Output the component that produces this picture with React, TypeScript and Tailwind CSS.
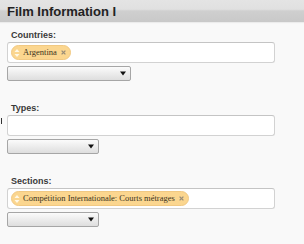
import React from "react";

function Tag({ label }: { label: string }) {
  return (
    <span className="inline-flex h-[15px] items-center rounded-full border border-[#f1c983] bg-[#fbd68f] pl-[2px] pr-[4px]">
      <svg width="6" height="10" viewBox="0 0 6 10" className="mr-[3px]">
        <path d="M3 1 L5.5 4 L0.5 4 Z" fill="#fff8e6" />
        <path d="M3 9 L5.5 6 L0.5 6 Z" fill="#fff8e6" />
      </svg>
      <span className="text-[8.5px] leading-none text-[#3a3320]" style={{ fontFamily: '"Liberation Serif", serif' }}>
        {label}
      </span>
      <svg width="5" height="5" viewBox="0 0 5 5" className="ml-[4px]">
        <path d="M0.6 0.6 L4.4 4.4 M4.4 0.6 L0.6 4.4" stroke="#9a8d78" strokeWidth="1.3" />
      </svg>
    </span>
  );
}

function Select({ w }: { w: string }) {
  return (
    <div
      className={`${w} mt-[3px] flex h-[15px] items-center justify-end rounded-[2px] border border-[#a6a6a6] bg-gradient-to-b from-[#fbfbfb] to-[#dedede] pr-[4px]`}
    >
      <svg width="6" height="5" viewBox="0 0 6 5">
        <path d="M0 0.5 L6 0.5 L3 4.5 Z" fill="#111" />
      </svg>
    </div>
  );
}

function Field({ label, tag, selW, first }: { label: string; tag?: string; selW: string; first?: boolean }) {
  return (
    <div className={first ? "mt-[8px]" : "mt-[22px]"}>
      <div className="h-[10px] pl-[4px] text-[9px] font-bold leading-[10px] text-[#3a3a3a]">{label}</div>
      <div className="mt-[2px] flex h-[21px] w-[268px] items-center rounded-[3px] border border-[#d2d2d2] border-t-[#c4c4c4] bg-white pl-[3px]">
        {tag ? <Tag label={tag} /> : null}
      </div>
      <Select w={selW} />
    </div>
  );
}

export default function App() {
  return (
    <div
      className="relative h-[244px] w-[304px] overflow-hidden bg-[#f9f9f9]"
      style={{ fontFamily: '"Liberation Sans", Arial, sans-serif' }}
    >
      <div className="flex h-[22px] items-center bg-[linear-gradient(#e4e4e4_0%,#e0e0e0_42%,#cfcfcf_50%,#c9c9c9_100%)] pl-[7px] shadow-[0_1px_1px_rgba(0,0,0,0.05)]">
        <span className="text-[13px] font-bold leading-none text-[#222]">Film Information I</span>
      </div>
      <div className="pl-[7px]">
        <Field first label="Countries:" tag="Argentina" selW="w-[124px]" />
        <Field label="Types:" selW="w-[92px]" />
        <Field label="Sections:" tag="Compétition Internationale: Courts métrages" selW="w-[92px]" />
      </div>
      <div className="absolute left-[1px] top-[118px] h-[6px] w-[1px] bg-[#333]" />
    </div>
  );
}
